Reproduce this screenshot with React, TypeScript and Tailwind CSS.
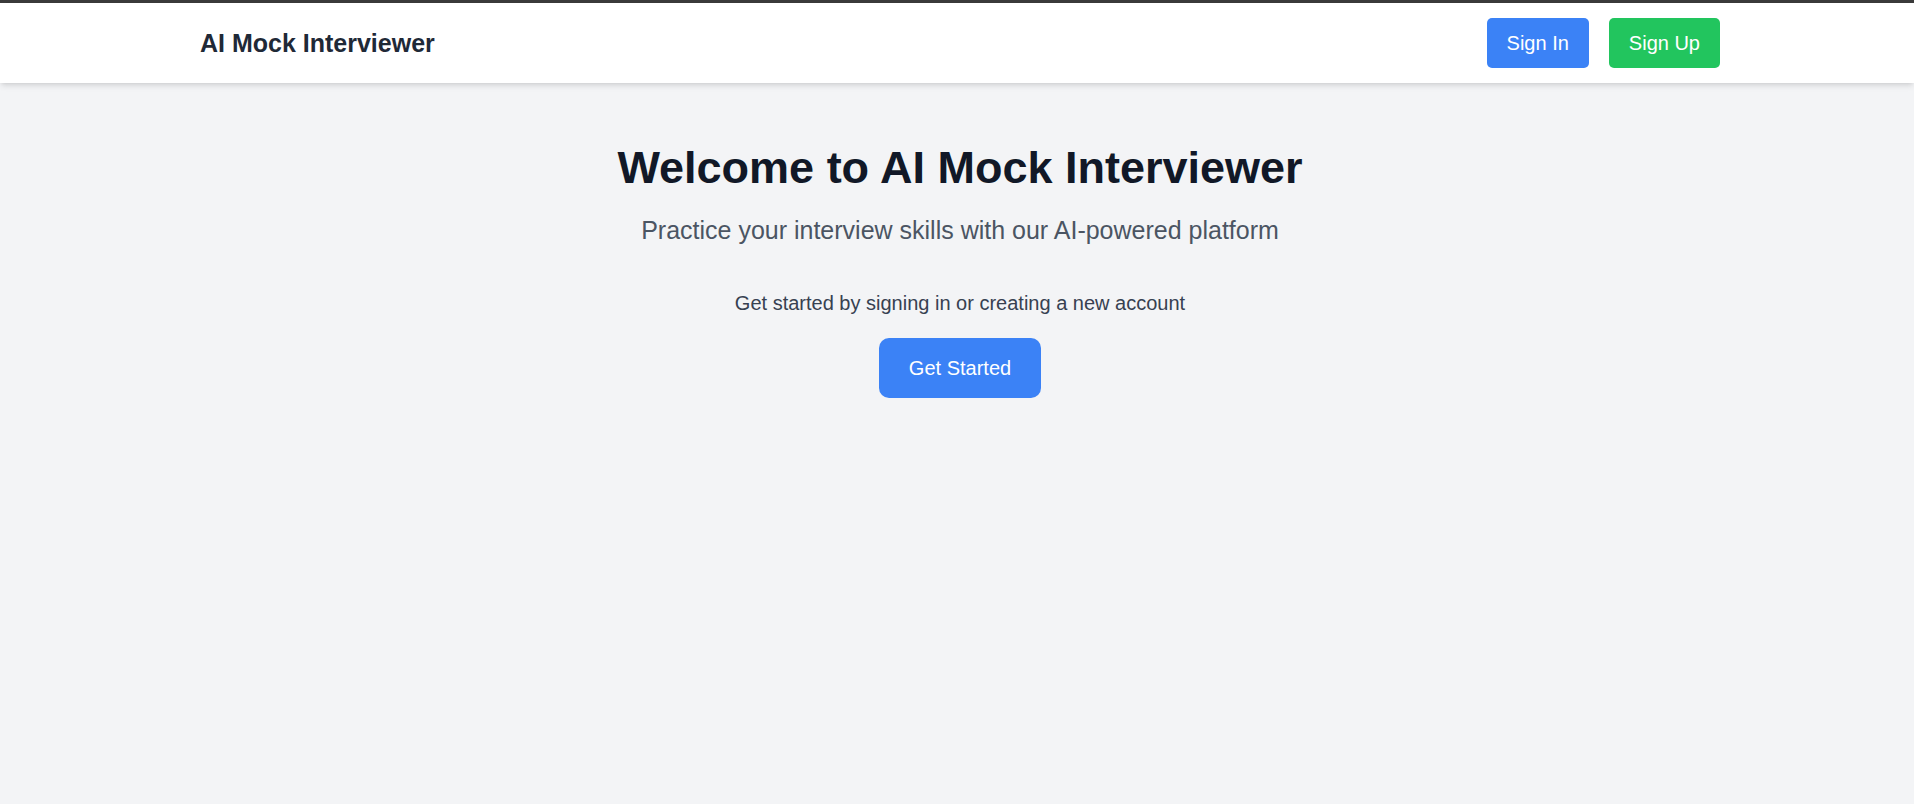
import React from "react";

export default function App() {
  return (
    <div
      className="min-h-[804px] bg-[#f3f4f6] border-t-[3px] border-[#3a3a3a]"
      style={{ fontFamily: '"Liberation Sans", Arial, sans-serif' }}
    >
      <header className="bg-white shadow-md pl-[6px]">
        <div className="mx-auto max-w-[1600px] px-10 py-[15px] flex items-center justify-between">
          <h1 className="text-[25px] leading-[35px] font-bold text-[#1f2937]">AI Mock Interviewer</h1>
          <div className="flex items-center gap-5">
            <button className="bg-[#3b82f6] text-white text-[20px] leading-[30px] px-5 py-[10px] rounded-[5px]">
              Sign In
            </button>
            <button className="bg-[#22c55e] text-white text-[20px] leading-[30px] px-5 py-[10px] rounded-[5px]">
              Sign Up
            </button>
          </div>
        </div>
      </header>
      <main className="mx-auto max-w-[1600px] pl-[46px] pr-10 pt-[60px] flex flex-col items-center text-center">
        <h2 className="text-[45px] leading-[50px] font-bold text-[#111827] mb-5">Welcome to AI Mock Interviewer</h2>
        <p className="text-[25px] leading-[35px] text-[#4b5563] mb-10">
          Practice your interview skills with our AI-powered platform
        </p>
        <p className="text-[20px] leading-[30px] text-[#374151] mb-5">
          Get started by signing in or creating a new account
        </p>
        <button className="bg-[#3b82f6] text-white text-[20px] leading-[30px] px-[30px] py-[15px] rounded-[10px]">
          Get Started
        </button>
      </main>
    </div>
  );
}
